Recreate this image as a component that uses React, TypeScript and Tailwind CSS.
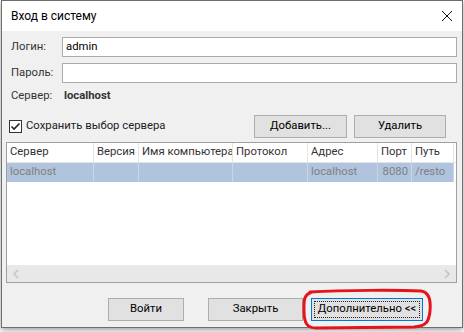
import React from "react";

const cols = [
  { name: "Сервер", w: 87, v: "localhost" },
  { name: "Версия", w: 45, v: "" },
  { name: "Имя компьютера", w: 94, v: "" },
  { name: "Протокол", w: 75, v: "" },
  { name: "Адрес", w: 70, v: "localhost" },
  { name: "Порт", w: 34, v: "8080", right: true },
  { name: "Путь", w: 42, v: "/resto" },
];

function Btn({ children, w, focused }: { children: React.ReactNode; w: string; focused?: boolean }) {
  return (
    <div
      className={`${w} h-[23px] flex items-center justify-center bg-[#e1e1e1] border ${
        focused ? "border-[#0078d7]" : "border-[#adadad]"
      } relative text-[#000]`}
    >
      {focused && <div className="absolute inset-[2px] border border-dotted border-[#222]" />}
      <span className="relative">{children}</span>
    </div>
  );
}

export default function App() {
  return (
    <div
      className="w-[464px] h-[332px] bg-white relative overflow-hidden text-[11.3px] text-[#000]"
      style={{ fontFamily: "Roboto, 'Noto Sans', sans-serif" }}
    >
      <div className="ml-[1px] w-[462px] h-[328px] border border-[#6e6e6e] shadow-[0_2px_6px_rgba(0,0,0,0.4)] flex flex-col bg-[#f0f0f0]">
        {/* title bar */}
        <div className="h-[30px] bg-white flex items-center justify-between pl-[9px] pr-[9px]">
          <span className="text-[12px] leading-none mt-[-1px]">Вход в систему</span>
          <svg width="12" height="12" viewBox="0 0 12 12">
            <path d="M1 1 L11 11 M11 1 L1 11" stroke="#111" strokeWidth="1" />
          </svg>
        </div>
        {/* body */}
        <div className="flex-1 flex flex-col px-[4px]">
          <div className="flex items-center mt-[6px] h-[20px] pl-[5px] pr-[1px]">
            <span className="w-[51px] text-[#333]">Логин:</span>
            <div className="flex-1 h-[20px] bg-white border border-[#ababab] flex items-center pl-[3px]">admin</div>
          </div>
          <div className="flex items-center mt-[6px] h-[20px] pl-[5px] pr-[1px]">
            <span className="w-[51px] text-[#333]">Пароль:</span>
            <div className="flex-1 h-[20px] bg-white border border-[#ababab]" />
          </div>
          <div className="flex items-center mt-[5px] h-[17px] pl-[5px]">
            <span className="w-[53px] text-[#333]">Сервер:</span>
            <span className="font-bold text-[#333]">localhost</span>
          </div>
          <div className="flex items-center mt-[10px] h-[23px] pl-[3px] pr-[12px]">
            <svg width="13" height="13" viewBox="0 0 13 13">
              <rect x="0.5" y="0.5" width="12" height="12" fill="#fff" stroke="#333" />
              <path d="M2.5 6.5 L5 9 L10.5 3.5" stroke="#222" strokeWidth="1.6" fill="none" />
            </svg>
            <span className="ml-[4px] text-[#222]">Сохранить выбор сервера</span>
            <div className="flex-1" />
            <Btn w="w-[93px]">Добавить...</Btn>
            <div className="w-[7px]" />
            <Btn w="w-[92px]">Удалить</Btn>
          </div>
          {/* table */}
          <div className="mt-[4px] h-[141px] border border-[#a0a0a0] bg-white flex flex-col mr-[1px]">
            <div className="flex h-[20px] border-b border-[#e5e5e5]">
              {cols.map((c) => (
                <div
                  key={c.name}
                  style={{ width: c.w }}
                  className="h-full border-r border-[#e5e5e5] flex items-center pl-[3px] text-[#333] whitespace-nowrap overflow-hidden"
                >
                  {c.name}
                </div>
              ))}
            </div>
            <div className="flex h-[19px] bg-white">
              {cols.map((c) => (
                <div
                  key={c.name}
                  style={{ width: c.w }}
                  className={`h-full bg-[#b0c4de] border-r border-[#c9d6e8] flex items-center text-[#808080] whitespace-nowrap overflow-hidden ${
                    c.right ? "justify-end pr-[3px]" : "pl-[3px]"
                  }`}
                >
                  {c.v}
                </div>
              ))}
            </div>
            <div className="flex-1" />
            <div className="h-[17px] bg-[#e8e8e8] flex items-center justify-between px-[5px]">
              <svg width="8" height="10" viewBox="0 0 8 10">
                <path d="M6 1 L2 5 L6 9" stroke="#c4c4c4" strokeWidth="1.6" fill="none" />
              </svg>
              <svg width="8" height="10" viewBox="0 0 8 10">
                <path d="M2 1 L6 5 L2 9" stroke="#c4c4c4" strokeWidth="1.6" fill="none" />
              </svg>
            </div>
          </div>
          {/* bottom buttons */}
          <div className="flex items-center mt-[15px] h-[23px] pl-[102px]">
            <Btn w="w-[76px]">Войти</Btn>
            <div className="w-[24px]" />
            <Btn w="w-[95px]">Закрыть</Btn>
            <div className="w-[8px]" />
            <Btn w="w-[112px]" focused>
              Дополнительно &lt;&lt;
            </Btn>
          </div>
        </div>
      </div>
      {/* red annotation */}
      <svg className="absolute left-0 top-0 pointer-events-none" width="464" height="332" viewBox="0 0 464 332">
        <path
          d="M310 292 C345 290 400 290 421 291 C429 292 431 300 430 311 C429 322 426 326 414 327 L316 328 C307 328 304 323 304 311 C304 301 303 295 312 292"
          stroke="#e5141c"
          strokeWidth="3"
          fill="none"
          strokeLinecap="round"
        />
      </svg>
    </div>
  );
}
